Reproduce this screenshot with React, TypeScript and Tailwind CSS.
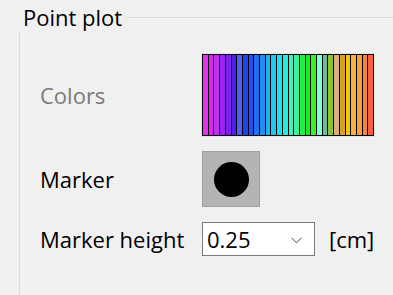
const stripes = [
  "bg-[#e830f0]", "bg-[#e020f0]", "bg-[#c030f0]", "bg-[#a020f0]", "bg-[#8020f0]",
  "bg-[#5020f0]", "bg-[#5060f0]", "bg-[#2040f8]", "bg-[#2050f0]", "bg-[#2070f0]",
  "bg-[#2090f0]", "bg-[#20b0f0]", "bg-[#20c8f0]", "bg-[#20e0f0]", "bg-[#20f0e0]",
  "bg-[#40f0c0]", "bg-[#40f0a0]", "bg-[#20f040]", "bg-[#10f020]", "bg-[#40f020]",
  "bg-[#80ffd0]", "bg-[#60c0a0]", "bg-[#90c030]", "bg-[#d8b080]", "bg-[#d8a020]",
  "bg-[#f0c800]", "bg-[#f8b040]", "bg-[#f8a040]", "bg-[#f88040]", "bg-[#f86040]",
];

function ColorBar() {
  return (
    <div className="w-[174px] h-[84px] border border-[#e4e4e4] -m-px">
      <div className="flex h-full gap-px bg-black border border-black">
        {stripes.map((c, i) => (
          <div key={i} className={`flex-1 ${c}`} />
        ))}
      </div>
    </div>
  );
}

function Chevron() {
  return (
    <svg width="11" height="7" viewBox="0 0 11 7" className="text-[#444] mt-[2px]">
      <path d="M0.5 0.8 L5.5 5.8 L10.5 0.8" fill="none" stroke="currentColor" strokeWidth="1" />
    </svg>
  );
}

export default function App() {
  return (
    <div className="w-[393px] h-[295px] overflow-hidden bg-[#f0f0f0] text-black text-[22px] leading-[28px] font-['Open_Sans','Noto_Sans',sans-serif]">
      <div className="flex items-start h-[32px] pt-[3px]">
        <span className="pl-[23px] pr-[4px]">Point plot</span>
        <div className="flex-1 h-px bg-[#dcdcdc] mt-[14px]" />
      </div>

      <div className="ml-[19px] h-[263px] border-l border-[#dcdcdc] pt-[22px]">
        <div className="grid grid-cols-[182px_auto] items-center gap-y-[15px]">
          <span className="pl-[20px] text-[#7a7a7a]">Colors</span>
          <ColorBar />

          <span className="pl-[20px]">Marker</span>
          <div className="w-[58px] h-[56px] bg-[#b4b4b4] border border-[#a0a0a0] flex items-center justify-center">
            <div className="w-[35px] h-[35px] rounded-full bg-black" />
          </div>

          <span className="pl-[20px]">Marker height</span>
          <div className="flex items-center gap-[14px]">
            <div className="w-[113px] h-[34px] bg-white border border-[#7a7a7a] flex items-center justify-between pl-[4px] pr-[12px]">
              <span>0.25</span>
              <Chevron />
            </div>
            <span>[cm]</span>
          </div>
        </div>
      </div>
    </div>
  );
}
